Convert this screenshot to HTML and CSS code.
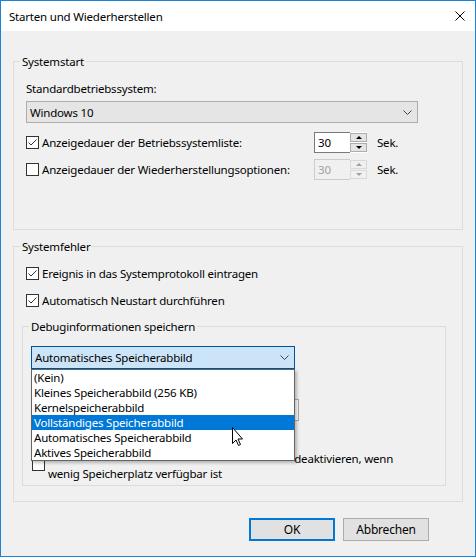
FILE: index.html
```html
<!DOCTYPE html>
<html lang="de">
<head>
  <meta charset="UTF-8" />
  <title>Starten und Wiederherstellen</title>
  <link rel="stylesheet" href="styles.css">
</head>
<body>
  <div class="window">
    <div class="titlebar">
      <span class="title">Starten und Wiederherstellen</span>
      <svg class="close" width="10" height="10" viewBox="0 0 10 10">
        <path d="M0.5 0.5 L9.5 9.5 M9.5 0.5 L0.5 9.5" stroke="#000" stroke-width="1" fill="none" />
      </svg>
    </div>

    <div class="content">
      <fieldset class="group group-start">
        <legend>Systemstart</legend>
        <div class="text-line">Standardbetriebssystem:</div>
        <div class="combo combo-os">
          <span>Windows 10</span>
          <svg class="chevron" width="9" height="5" viewBox="0 0 9 5"><path d="M0.5 0.5 L4.5 4.5 L8.5 0.5" stroke="#444" fill="none" /></svg>
        </div>

        <div class="spin-row first">
          <span class="cb"><svg width="11" height="11" viewBox="0 0 11 11"><path d="M1.5 5.5 L4 8 L9.5 2.5" stroke="#333" fill="none" /></svg></span>
          <span class="spin-label">Anzeigedauer der Betriebssystemliste:</span>
          <div class="spin">
            <span class="spin-input">30</span>
            <span class="spin-btns">
              <span class="spin-btn"><i class="tri up"></i></span>
              <span class="spin-btn"><i class="tri down"></i></span>
            </span>
          </div>
          <span class="unit">Sek.</span>
        </div>

        <div class="spin-row">
          <span class="cb"></span>
          <span class="spin-label">Anzeigedauer der Wiederherstellungsoptionen:</span>
          <div class="spin disabled">
            <span class="spin-input">30</span>
            <span class="spin-btns">
              <span class="spin-btn"><i class="tri up"></i></span>
              <span class="spin-btn"><i class="tri down"></i></span>
            </span>
          </div>
          <span class="unit">Sek.</span>
        </div>
      </fieldset>

      <fieldset class="group group-error">
        <legend>Systemfehler</legend>
        <div class="check-row">
          <span class="cb"><svg width="11" height="11" viewBox="0 0 11 11"><path d="M1.5 5.5 L4 8 L9.5 2.5" stroke="#333" fill="none" /></svg></span>
          <span>Ereignis in das Systemprotokoll eintragen</span>
        </div>
        <div class="check-row second">
          <span class="cb"><svg width="11" height="11" viewBox="0 0 11 11"><path d="M1.5 5.5 L4 8 L9.5 2.5" stroke="#333" fill="none" /></svg></span>
          <span>Automatisch Neustart durchführen</span>
        </div>

        <fieldset class="group group-debug">
          <legend>Debuginformationen speichern</legend>
          <div class="dropdown">
            <div class="combo combo-open">
              <span>Automatisches Speicherabbild</span>
              <svg class="chevron" width="9" height="5" viewBox="0 0 9 5"><path d="M0.5 0.5 L4.5 4.5 L8.5 0.5" stroke="#444" fill="none" /></svg>
            </div>
            <ul class="list">
              <li>(Kein)</li>
              <li>Kleines Speicherabbild (256 KB)</li>
              <li>Kernelspeicherabbild</li>
              <li class="selected">Vollständiges Speicherabbild</li>
              <li>Automatisches Speicherabbild</li>
              <li>Aktives Speicherabbild</li>
              <svg class="cursor" width="13" height="21" viewBox="0 0 13 21">
                <path d="M1.5 1.5 L1.5 17.5 L5 14 L7.5 19.5 L9.5 18.5 L7 13 L11.5 13 Z" fill="#fff" stroke="#000" stroke-width="1" stroke-linejoin="miter" />
              </svg>
            </ul>
          </div>

          <!-- hidden under the open list -->
          <div class="text-line dump-label"></div>
          <div class="textbox"></div>
          <div class="check-row overwrite">
            <span class="cb"></span>
          </div>
          <div class="check-row multi">
            <span class="cb"></span>
            <span class="multi-text"><span class="covered">Automatisches Löschen von Speicherabbildern </span>deaktivieren, wenn wenig Speicherplatz verfügbar ist</span>
          </div>
        </fieldset>
      </fieldset>

      <div class="buttons">
        <button type="button" class="btn default">OK</button>
        <button type="button" class="btn">Abbrechen</button>
      </div>
    </div>
  </div>
</body>
</html>
```

FILE: styles.css
```css
* {
  box-sizing: border-box;
}
body {
  margin: 0;
  background: #fff;
  font-family: "Noto Sans", "Open Sans", sans-serif;
  font-size: 11.5px;
  letter-spacing: -0.2px;
  color: #000;
}
.window {
  width: 476px;
  height: 557px;
  border: 1px solid #1883d7;
  background: #f0f0f0;
  display: flex;
  flex-direction: column;
}
.titlebar {
  height: 30px;
  background: #fff;
  display: flex;
  align-items: center;
  justify-content: space-between;
  padding: 0 10px 0 8px;
  flex: none;
}
.close {
  display: block;
}
.content {
  padding: 23px 12px 0 12px;
}

/* group boxes */
.group {
  margin: 0;
  border: 1px solid #dcdcdc;
  min-width: 0;
}
.group legend {
  padding: 0 2px;
  line-height: 15px;
}
.group-start {
  padding: 12px 12px 49px 12px;
}
.group-start legend,
.group-error legend {
  margin-left: -6px;
}
.group-error {
  margin-top: 9px;
  padding: 12px 12px 15px 12px;
}
.group-debug {
  margin: 11px 4px 0 -4px;
  padding: 12px 8px 4px 8px;
}
.group-debug legend {
  margin-left: -2px;
}

.text-line {
  line-height: 15px;
  min-height: 15px;
}

/* combo boxes */
.combo {
  display: flex;
  align-items: center;
  justify-content: space-between;
  border: 1px solid #adadad;
  background: #e5e5e5;
  padding: 0 5px 0 3px;
}
.combo-os {
  margin-top: 5px;
  width: 392px;
  height: 22px;
}
.combo-open {
  width: 264px;
  height: 23px;
  background: #cce4f7;
  border-color: #005499;
}
.chevron {
  display: block;
}

/* checkbox */
.cb {
  width: 13px;
  height: 13px;
  border: 1px solid #333;
  background: #fff;
  margin-right: 3px;
  flex: none;
}
.cb svg {
  display: block;
}

/* spinner rows */
.spin-row {
  display: flex;
  align-items: center;
  height: 21px;
  margin-top: 6px;
}
.spin-row.first {
  margin-top: 9px;
}
.spin-label {
  width: 272px;
  white-space: nowrap;
}
.spin {
  display: flex;
  height: 21px;
}
.spin-input {
  width: 36px;
  border: 1px solid #7a7a7a;
  border-right: none;
  background: #fff;
  padding-left: 3px;
  line-height: 19px;
}
.spin-btns {
  display: flex;
  flex-direction: column;
  justify-content: space-between;
  width: 17px;
  padding: 1px 0;
  background: #fff;
}
.spin-btn {
  height: 9px;
  border: 1px solid #adadad;
  background: #e5e5e5;
  display: flex;
  align-items: center;
  justify-content: center;
}
.tri {
  width: 0;
  height: 0;
  border-left: 3px solid transparent;
  border-right: 3px solid transparent;
}
.tri.up {
  border-bottom: 3px solid #000;
}
.tri.down {
  border-top: 3px solid #000;
}
.spin.disabled .spin-input {
  border-color: #cccccc;
  background: #f0f0f0;
  color: #a0a0a0;
}
.spin.disabled .spin-btns {
  background: #f0f0f0;
}
.spin.disabled .spin-btn {
  border-color: #d9d9d9;
  background: #f0f0f0;
}
.spin.disabled .tri.up {
  border-bottom-color: #a0a0a0;
}
.spin.disabled .tri.down {
  border-top-color: #a0a0a0;
}
.unit {
  margin-left: 10px;
}

/* check rows */
.check-row {
  display: flex;
  align-items: center;
  height: 15px;
}
.check-row.second {
  margin-top: 12px;
}
.check-row.overwrite {
  margin-top: 7px;
  margin-left: 1px;
}
.check-row.multi {
  height: 30px;
  margin-top: 8px;
  margin-left: 1px;
}
.check-row.multi .cb {
  margin-top: -3px;
}
.multi-text {
  line-height: 15px;
  width: 360px;
}
.covered {
  visibility: hidden;
}

/* open dropdown */
.dropdown {
  position: relative;
}
.list {
  position: absolute;
  top: 100%;
  left: 0;
  z-index: 2;
  width: 264px;
  margin: 0;
  padding: 0;
  list-style: none;
  background: #fff;
  border: 1px solid #646464;
  box-shadow: 2px 2px 3px rgba(0, 0, 0, 0.25);
}
.list li {
  line-height: 15px;
  padding-left: 2px;
  white-space: nowrap;
}
.list li.selected {
  background: #0078d7;
  color: #fff;
}
.cursor {
  position: absolute;
  left: 199px;
  top: 56px;
}

.dump-label {
  margin-top: 8px;
}
.textbox {
  margin-top: 7px;
  width: 268px;
  height: 22px;
  border: 1px solid #adadad;
  background: #fff;
}

/* buttons */
.buttons {
  display: flex;
  justify-content: flex-end;
  gap: 8px;
  margin-top: 16px;
  padding-right: 34px;
}
.btn {
  width: 86px;
  height: 23px;
  border: 1px solid #adadad;
  background: #e1e1e1;
  font-family: inherit;
  font-size: 12px;
  letter-spacing: inherit;
  color: #000;
  padding: 0;
}
.btn.default {
  border: 2px solid #0078d7;
}
```
